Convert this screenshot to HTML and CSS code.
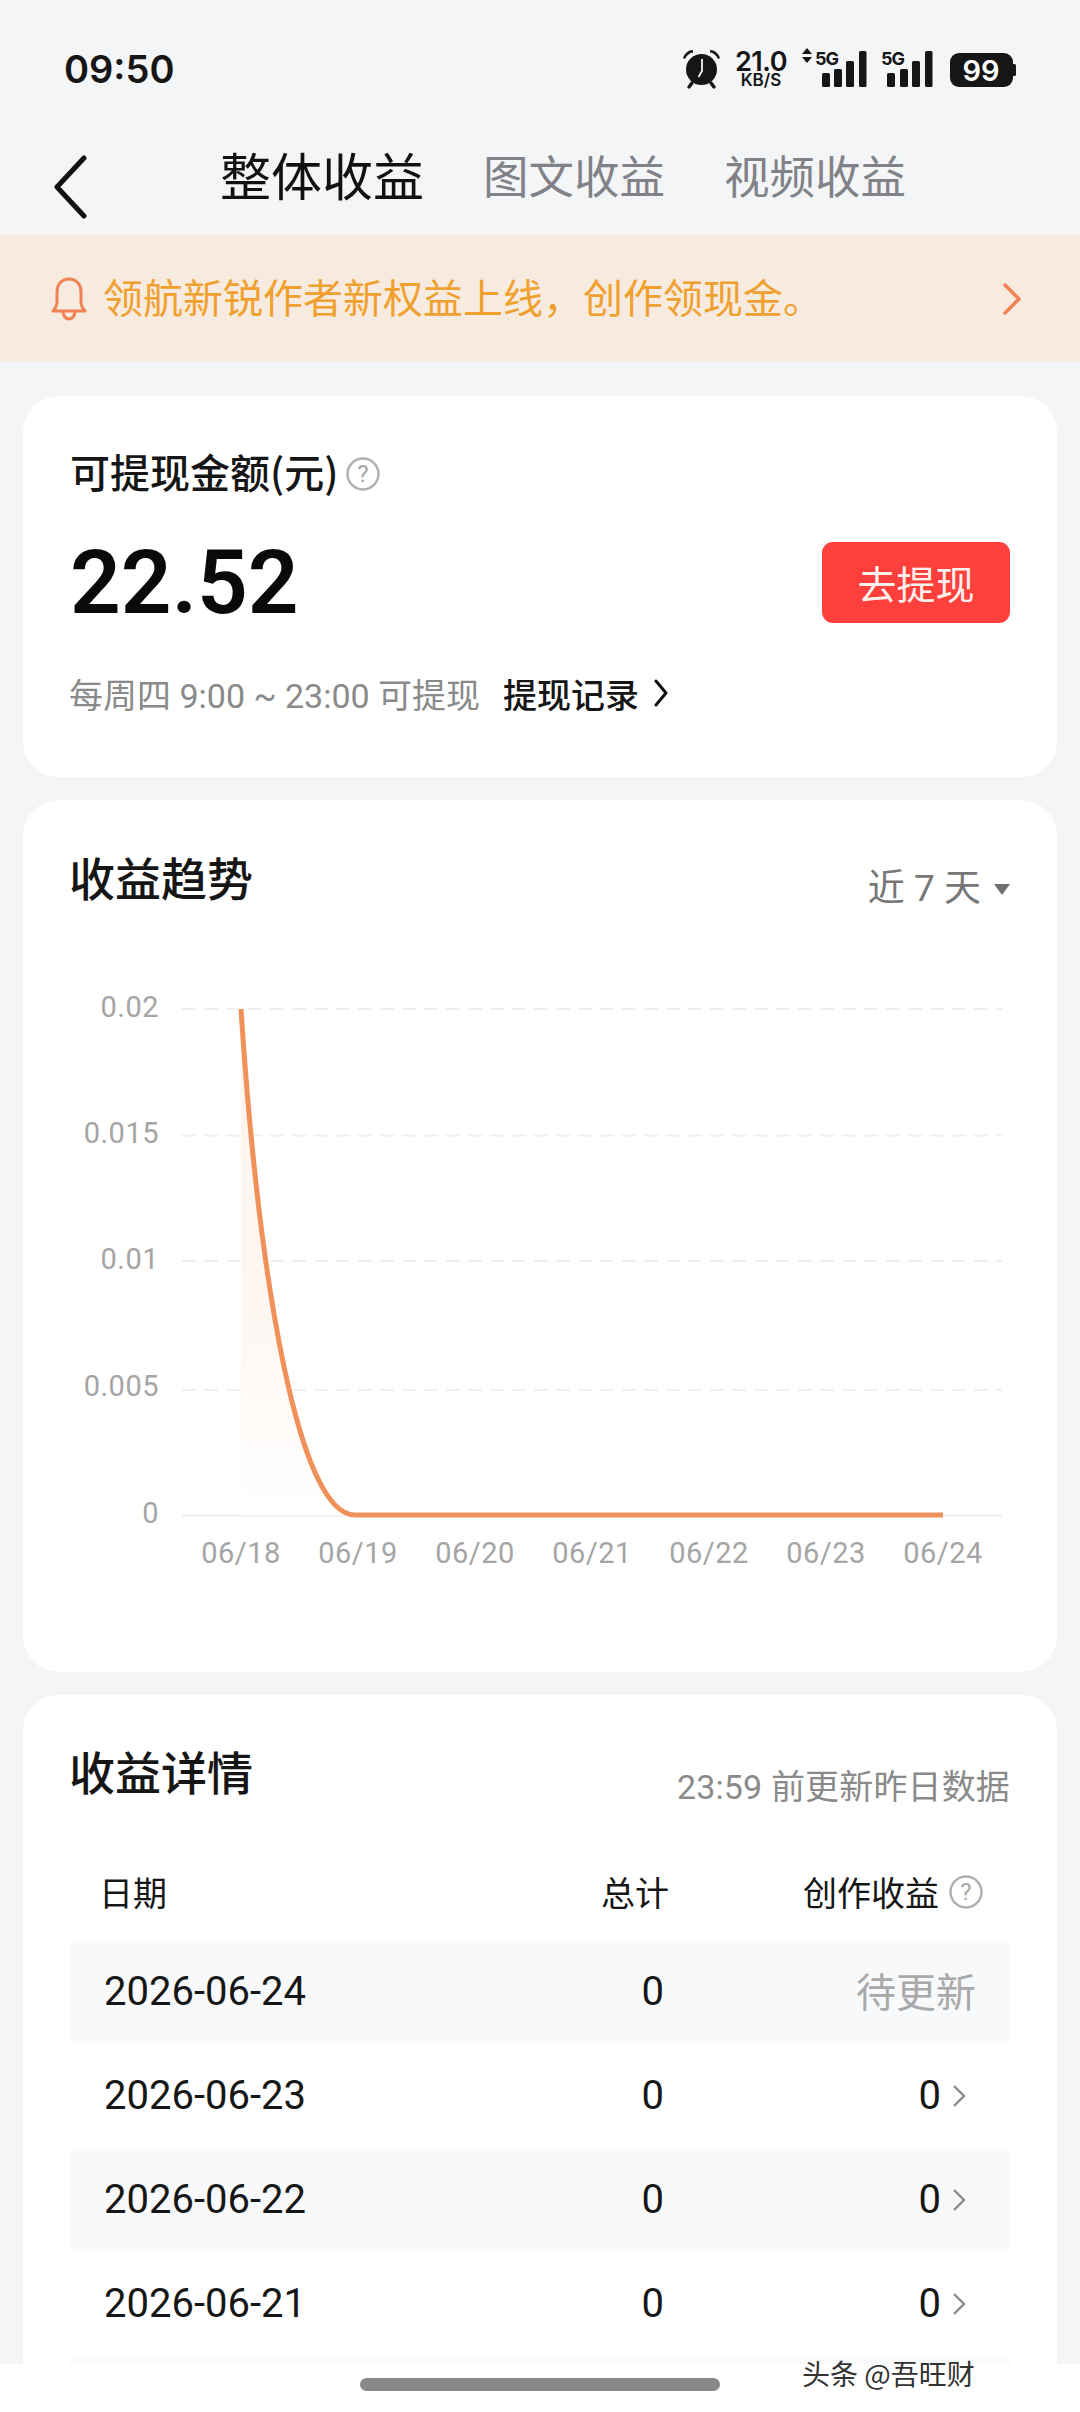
FILE: index.html
```html
<!DOCTYPE html>
<html lang="zh">
<head>
<meta charset="utf-8">
<title>整体收益</title>
<link rel="stylesheet" href="styles.css">
</head>
<body>
<div class="page">
  <header class="status">
    <span class="time">09:50</span>
    <div class="status-right">
      <svg class="alarm" width="40" height="44" viewBox="0 0 40 44">
        <g fill="#161616">
          <circle cx="19.5" cy="22.500" r="15.500"/>
          <path d="M1 11 Q4 3 11 3 L11 5.500 Q6 6 3 12 Z M38 11 Q35 3 28 3 L28 5.500 Q33 6 36 12 Z"/>
          <path d="M10 36 L7 40 M29 36 L32 40" stroke="#161616" stroke-width="3.4" stroke-linecap="round"/>
        </g>
        <path d="M20 12 V24 L16.5 30" fill="none" stroke="#f4f5f7" stroke-width="1.8"/>
      </svg>
      <div class="speed">
        <span class="speed-num">21.0</span>
        <span class="speed-unit">KB/S</span>
      </div>
      <svg class="net" width="230" height="44" viewBox="110 0 230 44">
        <path d="M124 8 L129 2 L134 8 Z M124 11 H134 L129 17 Z" fill="#161616"/>
        <text class="st-5g" x="137" y="19">5G</text>
        <g fill="#161616">
          <rect x="144" y="27" width="8" height="14" rx="1.5"/>
          <rect x="156" y="23" width="8" height="18" rx="1.5"/>
          <rect x="168" y="15" width="8" height="26" rx="1.5"/>
          <rect x="181" y="5" width="7.500" height="36" rx="1.500"/>
        </g>
        <text class="st-5g" x="203" y="19">5G</text>
        <g fill="#161616">
          <rect x="209" y="27" width="8" height="14" rx="1.5"/>
          <rect x="222" y="23" width="8" height="18" rx="1.5"/>
          <rect x="234" y="15" width="8" height="26" rx="1.5"/>
          <rect x="247" y="5" width="7.500" height="36" rx="1.500"/>
          <rect x="272" y="7" width="63" height="34" rx="9"/>
          <rect x="334" y="18" width="4" height="12" rx="1.500"/>
        </g>
        <text class="st-batt" x="303" y="35">99</text>
      </svg>
    </div>
  </header>

  <nav class="nav">
    <svg class="back" width="36" height="64" viewBox="0 0 36 64"><path d="M32 3 L5 32 L32 61" fill="none" stroke="#111" stroke-width="5" stroke-linecap="round" stroke-linejoin="round"/></svg>
    <div class="tabs">
      <span class="tab tab-on">整体收益</span>
      <span class="tab">图文收益</span>
      <span class="tab">视频收益</span>
    </div>
  </nav>

  <div class="notice">
    <svg class="bell" width="38" height="46" viewBox="0 0 38 46"><path d="M3 35 Q7 31 7 25 V16 C7 8 12 3 19 3 C26 3 31 8 31 16 V25 Q31 31 35 35 Z" fill="none" stroke="#ee8252" stroke-width="3" stroke-linejoin="round"/><path d="M13 36 Q14 43 19 43 Q24 43 25 36" fill="none" stroke="#ee8252" stroke-width="3"/></svg>
    <span class="notice-text">领航新锐作者新权益上线&#xFF0C;创作领现金。</span>
    <svg class="notice-arrow" width="20" height="32" viewBox="0 0 20 32"><path d="M3 2 L17 16 L3 30" fill="none" stroke="#ee8252" stroke-width="3.500" stroke-linecap="round" stroke-linejoin="round"/></svg>
  </div>

  <section class="card card-balance">
    <div class="bal-title">
      <span>可提现金额(元)</span>
      <svg class="help" width="34" height="34" viewBox="0 0 34 34"><circle cx="17" cy="17" r="15.500" fill="none" stroke="#b0b0b0" stroke-width="2.400"/><text class="help-q" x="17" y="25">?</text></svg>
    </div>
    <div class="bal-main">
      <span class="amount">22.52</span>
      <button class="withdraw">去提现</button>
    </div>
    <div class="bal-foot">
      <span class="bal-note">每周四 9:00 ~ 23:00 可提现</span>
      <span class="bal-link">提现记录</span>
      <svg width="16" height="28" viewBox="0 0 16 28"><path d="M3 2 L13 14 L3 26" fill="none" stroke="#111" stroke-width="3" stroke-linecap="round" stroke-linejoin="round"/></svg>
    </div>
  </section>

  <section class="card card-trend">
    <div class="head">
      <h2 class="card-title">收益趋势</h2>
      <span class="range">近 7 天<i class="caret"></i></span>
    </div>
    <svg class="chart" width="1034" height="640" viewBox="0 0 1034 640">
      <defs>
        <linearGradient id="area" x1="0" y1="0" x2="0" y2="1">
          <stop offset="0" stop-color="#fdf3ec"/>
          <stop offset="0.6" stop-color="#fef7f2"/>
          <stop offset="1" stop-color="#fff"/>
        </linearGradient>
      </defs>
      <g class="grid">
        <path d="M159 49 H979"/><path d="M159 175.500 H979"/><path d="M159 301 H979"/><path d="M159 430 H979"/>
      </g>
      <path d="M159 555.500 H979" class="axis"/>
      <path d="M218 49 C236 325 276 555 332 555 L218 555 Z" fill="url(#area)"/>
      <path d="M218 49 C236 325 276 555 332 555 H920" class="line"/>
      <g class="y-labels">
        <text x="136" y="57">0.02</text>
        <text x="136" y="183">0.015</text>
        <text x="136" y="309">0.01</text>
        <text x="136" y="436">0.005</text>
        <text x="136" y="563">0</text>
      </g>
      <g class="x-labels">
        <text x="218" y="603">06/18</text>
        <text x="335" y="603">06/19</text>
        <text x="452" y="603">06/20</text>
        <text x="569" y="603">06/21</text>
        <text x="686" y="603">06/22</text>
        <text x="803" y="603">06/23</text>
        <text x="920" y="603">06/24</text>
      </g>
    </svg>
  </section>

  <section class="card card-detail">
    <div class="head head-detail">
      <h2 class="card-title">收益详情</h2>
      <span class="updated">23:59 前更新昨日数据</span>
    </div>
    <div class="table">
      <div class="row row-head">
        <span class="c-date">日期</span>
        <span class="c-total">总计</span>
        <span class="c-gain">创作收益<svg class="help" width="34" height="34" viewBox="0 0 34 34"><circle cx="17" cy="17" r="15.500" fill="none" stroke="#b0b0b0" stroke-width="2.400"/><text class="help-q" x="17" y="25">?</text></svg></span>
      </div>
      <div class="row row-alt">
        <span class="c-date">2026-06-24</span><span class="c-total">0</span><span class="c-gain pending">待更新</span>
      </div>
      <div class="row">
        <span class="c-date">2026-06-23</span><span class="c-total">0</span><span class="c-gain">0<svg class="more" width="14" height="24" viewBox="0 0 14 24"><path d="M2 2 L12 12 L2 22" fill="none" stroke="#8a8a8a" stroke-width="2.400"/></svg></span>
      </div>
      <div class="row row-alt">
        <span class="c-date">2026-06-22</span><span class="c-total">0</span><span class="c-gain">0<svg class="more" width="14" height="24" viewBox="0 0 14 24"><path d="M2 2 L12 12 L2 22" fill="none" stroke="#8a8a8a" stroke-width="2.400"/></svg></span>
      </div>
      <div class="row">
        <span class="c-date">2026-06-21</span><span class="c-total">0</span><span class="c-gain">0<svg class="more" width="14" height="24" viewBox="0 0 14 24"><path d="M2 2 L12 12 L2 22" fill="none" stroke="#8a8a8a" stroke-width="2.400"/></svg></span>
      </div>
      <div class="row row-alt"></div>
    </div>
  </section>

  <div class="home-bar"><i class="pill"></i></div>
  <span class="watermark">头条 @吾旺财</span>
</div>
</body>
</html>
```
FILE: styles.css
```css
* { box-sizing: border-box; }
html, body { margin: 0; padding: 0; }
body {
  background: #f4f5f7;
  color: #111;
  font-family: Roboto, "Noto Sans CJK SC", sans-serif;
}
.page {
  position: relative;
  width: 1080px;
  height: 2412px;
  overflow: hidden;
}

/* status bar */
.status {
  height: 120px;
  padding: 46px 62px 0 64px;
  display: flex;
  justify-content: space-between;
  align-items: flex-start;
}
.time {
  font-family: Inter, sans-serif;
  font-size: 38px;
  font-weight: 600;
  line-height: 46px;
  color: #161616;
}
.status-right {
  display: flex;
  align-items: flex-start;
}
.alarm { margin-top: 1px; }
.speed {
  width: 54px;
  margin: 5px 0 0 12px;
  display: flex;
  flex-direction: column;
  align-items: center;
  font-family: Inter, sans-serif;
  font-weight: 600;
  color: #161616;
}
.speed-num { font-size: 27px; line-height: 22px; letter-spacing: -0.5px; }
.speed-unit { font-size: 17px; line-height: 14px; }
.net text { font-family: Inter, sans-serif; fill: #161616; }
.net .st-5g { font-size: 18px; font-weight: 700; letter-spacing: -1px; }
.net .st-batt { font-size: 29px; font-weight: 600; text-anchor: middle; fill: #fff; }

/* nav */
.nav {
  height: 115px;
  padding-left: 52px;
  display: flex;
  align-items: center;
}
.back { margin-top: 18px; }
.tabs {
  margin-left: 132px;
  margin-bottom: 8px;
  display: flex;
  align-items: center;
  gap: 59px;
}
.tab {
  font-family: "Noto Sans CJK SC", sans-serif;
  font-size: 45.5px;
  line-height: 60px;
  color: #808287;
}
.tab-on {
  font-size: 51px;
  color: #111;
}

/* notice */
.notice {
  height: 127px;
  background: #f7ebdf;
  display: flex;
  align-items: center;
  padding: 0 58px 0 50px;
}
.notice-text {
  margin: 0 0 6px 15px;
  font-family: "Noto Sans CJK SC", sans-serif;
  font-size: 40px;
  color: #f0a02e;
  flex: 1;
}

/* cards */
.card {
  background: #fff;
  border-radius: 36px;
  margin: 0 23px;
}
.card-balance {
  margin-top: 34px;
  height: 381px;
  padding: 50px 47px 0;
}
.bal-title {
  display: flex;
  align-items: center;
  gap: 8px;
  height: 50px;
  font-family: "Noto Sans CJK SC", sans-serif;
  font-size: 40px;
  font-weight: 500;
  color: #161616;
}
.bal-title .help { margin-top: 6px; }
.help-q {
  font-family: Roboto, sans-serif;
  font-size: 24px;
  font-weight: 400;
  fill: #a6a6a6;
  text-anchor: middle;
}
.bal-main {
  margin-top: 33px;
  height: 106px;
  display: flex;
  justify-content: space-between;
  align-items: center;
}
.amount {
  font-size: 89px;
  font-weight: 600;
  color: #0a0a0a;
}
.withdraw {
  width: 188px;
  height: 81px;
  border: 0;
  border-radius: 11px;
  background: #fd403c;
  color: #fdf1ef;
  font-family: "Noto Sans CJK SC", sans-serif;
  font-size: 39px;
}
.bal-foot {
  margin-top: 33px;
  margin-left: -1px;
  display: flex;
  align-items: center;
  height: 50px;
  font-size: 34px;
}
.bal-note { color: #8a8a8a; }
.bal-link {
  margin-left: 23px;
  margin-right: 14px;
  color: #161616;
  font-weight: 500;
}

.card-trend {
  margin-top: 23px;
  height: 872px;
}
.head {
  display: flex;
  justify-content: space-between;
  align-items: flex-start;
  padding: 42px 47px 0;
  height: 160px;
}
.card-title {
  margin: 0 0 0 -1px;
  font-family: "Noto Sans CJK SC", sans-serif;
  font-size: 46px;
  font-weight: 500;
  line-height: 68px;
  color: #161616;
}
.range {
  margin-top: 17px;
  font-size: 37px;
  line-height: 60px;
  color: #777;
  display: flex;
  align-items: center;
}
.caret {
  margin-left: 13px;
  width: 0;
  height: 0;
  border-left: 8px solid transparent;
  border-right: 8px solid transparent;
  border-top: 11px solid #6f6f6f;
}
.chart { display: block; }
.grid path { stroke: #f0f0f0; stroke-width: 2; stroke-dasharray: 14 8; fill: none; }
.axis { stroke: #eef0f2; stroke-width: 2; fill: none; }
.line { stroke: #f0915a; stroke-width: 5; fill: none; }
.y-labels text, .x-labels text {
  font-family: Roboto, sans-serif;
  font-size: 29px;
  fill: #a5a5a5;
}
.y-labels text { text-anchor: end; letter-spacing: 0.5px; }
.x-labels text { text-anchor: middle; letter-spacing: 0.5px; }

.card-detail {
  margin-top: 23px;
  height: 800px;
}
.head-detail { height: 172px; padding-top: 41px; }
.updated {
  margin-top: 30px;
  font-size: 34px;
  line-height: 42px;
  color: #8a8a8a;
  letter-spacing: 0.15px;
}
.table { margin: 0 46px; }
.row {
  height: 104px;
  display: grid;
  grid-template-columns: 1fr 100px 347px;
  align-items: center;
  font-size: 40px;
  color: #161616;
  border-radius: 10px;
  padding-bottom: 1px;
}
.row-alt { background: #f8f9fb; }
.c-date { padding-left: 35px; }
.c-total { text-align: right; }
.c-gain {
  display: flex;
  justify-content: flex-end;
  align-items: center;
  padding-right: 45px;
}
.pending {
  padding-right: 35px;
  color: #a9a9a9;
  font-family: "Noto Sans CJK SC", sans-serif;
  font-size: 40px;
  margin-bottom: 3px;
}
.more { margin-left: 11px; }
.row-head {
  height: 73px;
  font-family: "Noto Sans CJK SC", sans-serif;
  font-size: 34px;
  padding-bottom: 24px;
}
.row-head .c-date { padding-left: 30px; }
.row-head .c-total { margin-right: -5px; }
.row-head .c-gain { padding-right: 28px; gap: 10px; }

/* overlays */
.home-bar {
  position: absolute;
  left: 0;
  right: 0;
  bottom: 0;
  height: 48px;
  background: #fff;
  display: flex;
  justify-content: center;
  padding-top: 14px;
}
.pill {
  display: block;
  width: 360px;
  height: 13px;
  border-radius: 7px;
  background: #888;
}
.watermark {
  position: absolute;
  left: 802px;
  top: 2354px;
  font-family: "Noto Sans CJK SC", sans-serif;
  font-size: 28px;
  line-height: 38px;
  color: #333;
}
```
